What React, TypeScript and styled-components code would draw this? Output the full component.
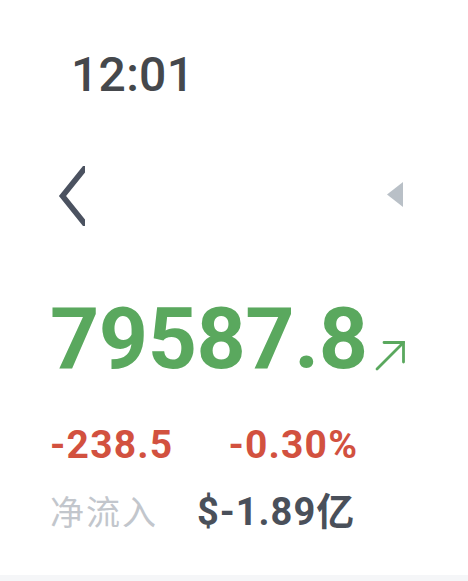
import React, { FC } from 'react';
import styled, { createGlobalStyle } from 'styled-components';

const GlobalStyle = createGlobalStyle`
  html, body {
    margin: 0;
    padding: 0;
    background: #ffffff;
  }
  body {
    font-family: Roboto, "Noto Sans CJK SC", sans-serif;
  }
`;

const App: FC = () => (
  <>
    <GlobalStyle />
    <Screen>
      <Content>
        <Clock>12:01</Clock>
        <NavRow>
          <BackButton aria-label="back">
            <svg width="27" height="60" viewBox="0 0 27 60">
              <polyline points="31,-3 4.5,30 31,63" fill="none" stroke="#4b5260" strokeWidth="5.6" strokeLinejoin="miter" />
            </svg>
          </BackButton>
          <Caret aria-hidden>
            <svg width="16" height="25" viewBox="0 0 16 25">
              <polygon points="0,12.5 16,0 16,25" fill="#b9c0c7" />
            </svg>
          </Caret>
        </NavRow>
        <PriceRow>
          <Price>79587.8</Price>
          <TrendArrow width="31" height="31" viewBox="0 0 31 31">
            <g fill="none" stroke="#5aa85e" strokeWidth="2.8" strokeLinecap="round">
              <line x1="2" y1="29" x2="28.5" y2="2.5" />
              <polyline points="9,2.5 28.5,2.5 28.5,22" />
            </g>
          </TrendArrow>
        </PriceRow>
        <ChangeRow>
          <Change>-238.5</Change>
          <Change>-0.30%</Change>
        </ChangeRow>
        <FlowRow>
          <FlowLabel>净流入</FlowLabel>
          <FlowValue>$-1.89亿</FlowValue>
        </FlowRow>
      </Content>
      <BottomBar />
    </Screen>
  </>
);

const Screen = styled.div`
  width: 468px;
  height: 581px;
  display: flex;
  flex-direction: column;
  overflow: hidden;
  background: #ffffff;
`;

const Content = styled.div`
  flex: 1;
  display: flex;
  flex-direction: column;
  padding: 47px 0 0 50px;
`;

const Clock = styled.div`
  margin-left: 21px;
  font-family: Roboto, sans-serif;
  font-size: 48px;
  font-weight: 500;
  line-height: 56px;
  color: #45484c;
  letter-spacing: 0.3px;
`;

const NavRow = styled.div`
  display: flex;
  align-items: flex-start;
  justify-content: space-between;
  width: 353px;
  margin-top: 63px;
  height: 60px;
`;

const BackButton = styled.div`
  width: 27px;
  height: 60px;
  margin-left: 8px;
  overflow: hidden;
  svg {
    display: block;
  }
`;

const Caret = styled.div`
  margin-top: 16px;
  svg {
    display: block;
  }
`;

const PriceRow = styled.div`
  display: flex;
  align-items: flex-end;
  margin-top: 73px;
  gap: 7px;
`;

const Price = styled.div`
  font-family: Roboto, sans-serif;
  font-size: 86px;
  font-weight: 700;
  line-height: 80px;
  color: #5aa85e;
  letter-spacing: -0.5px;
`;

const TrendArrow = styled.svg`
  display: block;
  margin-bottom: 8px;
`;

const ChangeRow = styled.div`
  display: flex;
  gap: 55px;
  margin-top: 44px;
`;

const Change = styled.div`
  font-family: Roboto, sans-serif;
  font-size: 39px;
  font-weight: 700;
  line-height: 44px;
  color: #d2513f;
  letter-spacing: 1.2px;
`;

const FlowRow = styled.div`
  display: flex;
  align-items: baseline;
  gap: 39px;
  margin-top: 22px;
`;

const FlowLabel = styled.div`
  font-family: "Noto Sans CJK SC", sans-serif;
  font-size: 34px;
  font-weight: 400;
  line-height: 44px;
  color: #c2c6cc;
  letter-spacing: 2px;
`;

const FlowValue = styled.div`
  font-family: Roboto, "Noto Sans CJK SC", sans-serif;
  font-size: 38px;
  font-weight: 700;
  line-height: 44px;
  color: #4a505a;
  letter-spacing: 1px;
`;

const BottomBar = styled.div`
  height: 6px;
  background: #f5f6f8;
`;

export default App;
